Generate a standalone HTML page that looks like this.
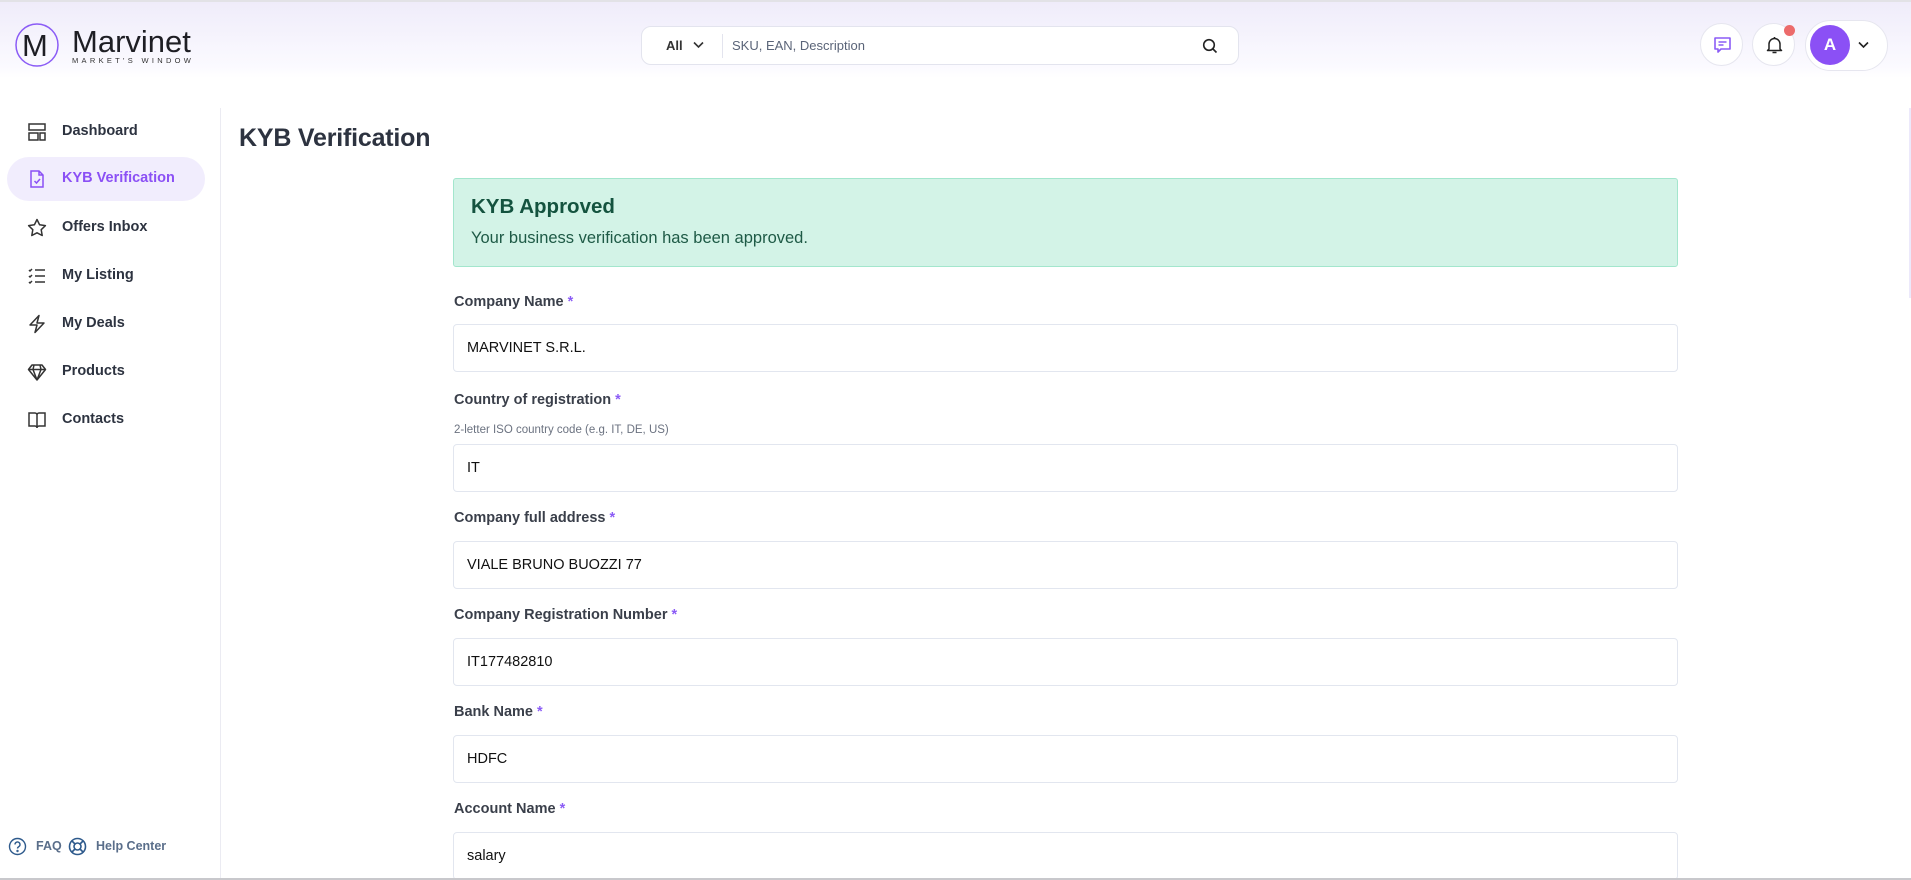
<!DOCTYPE html>
<html><head><meta charset="utf-8"><style>
*{box-sizing:border-box;margin:0;padding:0}
body{width:1911px;height:880px;overflow:hidden;background:#fff;font-family:"Liberation Sans",sans-serif;position:relative;color:#2d3340}
.abs{position:absolute}
.hdr{left:0;top:0;width:1911px;height:78px;background:linear-gradient(#efecfa,#fbfaff 85%,#fff);border-top:2px solid #e2e2e6}
.search{left:641px;top:26px;width:598px;height:39px;background:#fff;border:1px solid #e3e4ee;border-radius:10px}
.circ{width:43px;height:43px;border-radius:50%;background:#fff;border:1px solid #e6e6ef;top:23px}
.side{left:220px;top:108px;width:1px;height:772px;background:#ebebf2}
.nav{left:7px;height:44px;width:198px;border-radius:22px;font-size:14.5px;font-weight:bold;color:#2d3340}
.nav span{position:absolute;left:55px;top:13px}
.nav svg{position:absolute;left:20px;top:12px}
.lbl{left:454px;font-size:14.5px;font-weight:bold;color:#3a3f4a}
.lbl b{color:#8b5cf6}
.inp{left:453px;width:1225px;height:48px;border:1px solid #e2e6ef;border-radius:4px;font-size:14.5px;color:#111;padding:15px 0 0 13px}
</style></head><body>
<div class="abs hdr"></div>
<svg class="abs" style="left:14px;top:22px" width="46" height="46" viewBox="0 0 46 46"><circle cx="23" cy="23" r="21" fill="none" stroke="#8b5cf6" stroke-width="1.5"/></svg>
<div class="abs" style="left:22px;top:28px;font-size:31px;color:#1e1e24">M</div>
<div class="abs" style="left:72px;top:24px;font-size:31px;color:#1e1e24">Marvinet</div>
<div class="abs" style="left:72px;top:56px;font-size:7.5px;letter-spacing:3.3px;color:#333">MARKET'S WINDOW</div>
<div class="abs search">
<span class="abs" style="left:24px;top:11px;font-size:13px;font-weight:bold;color:#333">All</span>
<svg class="abs" style="left:51px;top:14px" width="11" height="8" viewBox="0 0 11 8"><path d="M1 1.5l4.5 4.5 4.5-4.5" fill="none" stroke="#333" stroke-width="1.6"/></svg>
<div class="abs" style="left:80px;top:7px;width:1px;height:24px;background:#e3e4ee"></div>
<span class="abs" style="left:90px;top:11px;font-size:13px;color:#5a6478">SKU, EAN, Description</span>
<svg class="abs" style="left:560px;top:11px" width="16" height="16" viewBox="0 0 16 16"><circle cx="7" cy="7" r="5.3" fill="none" stroke="#222" stroke-width="1.6"/><path d="M11 11l3.5 3.5" stroke="#222" stroke-width="1.6"/></svg>
</div>
<div class="abs circ" style="left:1700px"><svg class="abs" style="left:12px;top:12px" width="19" height="19" viewBox="0 0 19 19"><path d="M2 2h15v11H8l-3 3v-3H2z" fill="none" stroke="#8b5cf6" stroke-width="1.6" stroke-linejoin="round"/><path d="M5.5 6h8M5.5 9h5" stroke="#8b5cf6" stroke-width="1.6"/></svg></div>
<div class="abs circ" style="left:1752px"><svg class="abs" style="left:12px;top:11px" width="19" height="20" viewBox="0 0 19 20"><path d="M4 14V9a5.5 5.5 0 0111 0v5l1.5 1.5h-14z" fill="none" stroke="#222" stroke-width="1.5" stroke-linejoin="round"/><path d="M7.5 17.5h4M9.5 2v1.5" stroke="#222" stroke-width="1.5"/></svg></div>
<div class="abs" style="left:1784px;top:25px;width:11px;height:11px;border-radius:50%;background:#ec6b6b"></div>
<div class="abs" style="left:1805px;top:20px;width:83px;height:51px;border-radius:26px;background:#fff;border:1px solid #e6e6ef"></div>
<div class="abs" style="left:1810px;top:25px;width:40px;height:40px;border-radius:50%;background:#8b50f5;color:#fff;font-weight:bold;font-size:17px;text-align:center;line-height:40px">A</div>
<svg class="abs" style="left:1858px;top:41px" width="11" height="8" viewBox="0 0 11 8"><path d="M1 1.5l4.5 4.5 4.5-4.5" fill="none" stroke="#222" stroke-width="1.6"/></svg>

<div class="abs side"></div>
<div class="abs nav" style="top:110px"><svg width="20" height="20" viewBox="0 0 20 20" fill="none" stroke="#333" stroke-width="1.5"><rect x="2" y="2" width="16" height="6"/><rect x="2" y="11" width="9" height="7"/><rect x="13" y="11" width="5" height="7"/></svg><span>Dashboard</span></div>
<div class="abs nav" style="top:157px;background:#f1edfd;color:#8b50f5"><svg width="20" height="20" viewBox="0 0 20 20" fill="none" stroke="#8b50f5" stroke-width="1.5"><path d="M4 2h8l4 4v12H4z M12 2v4h4"/><path d="M7.5 12l2 2 3.5-4"/></svg><span style="color:#8b50f5">KYB Verification</span></div>
<div class="abs nav" style="top:206px"><svg width="20" height="20" viewBox="0 0 20 20" fill="none" stroke="#333" stroke-width="1.5" stroke-linejoin="round"><path d="M10 1.5l2.6 5.3 5.8.8-4.2 4.1 1 5.8L10 14.8l-5.2 2.7 1-5.8L1.6 7.6l5.8-.8z"/></svg><span>Offers Inbox</span></div>
<div class="abs nav" style="top:254px"><svg width="20" height="20" viewBox="0 0 20 20" fill="none" stroke="#333" stroke-width="1.5"><path d="M8 4h10M8 10h10M8 16h10M2 4l1 1 2-2M2 10l1 1 2-2M2 16l1 1 2-2"/></svg><span>My Listing</span></div>
<div class="abs nav" style="top:302px"><svg width="20" height="20" viewBox="0 0 20 20" fill="none" stroke="#333" stroke-width="1.5" stroke-linejoin="round"><path d="M12 1.5L3 11h7l-2 7.5 9-9.5h-7z"/></svg><span>My Deals</span></div>
<div class="abs nav" style="top:350px"><svg width="20" height="20" viewBox="0 0 20 20" fill="none" stroke="#333" stroke-width="1.5" stroke-linejoin="round"><path d="M5 3h10l3.5 4.5L10 18 1.5 7.5zM1.5 7.5h17M7 3l-1 4.5L10 18l4-10.5L13 3"/></svg><span>Products</span></div>
<div class="abs nav" style="top:398px"><svg width="20" height="20" viewBox="0 0 20 20" fill="none" stroke="#333" stroke-width="1.5"><path d="M2 3h6a2 2 0 012 2v13a2 2 0 00-2-2H2zM18 3h-6a2 2 0 00-2 2v13a2 2 0 012-2h6z"/></svg><span>Contacts</span></div>
<svg class="abs" style="left:8px;top:837px" width="19" height="19" viewBox="0 0 19 19" fill="none" stroke="#2e5a8c" stroke-width="1.4"><circle cx="9.5" cy="9.5" r="8"/><path d="M7 7.5a2.5 2.5 0 114 2c-1 .6-1.5 1-1.5 2"/><circle cx="9.5" cy="14" r=".5"/></svg>
<div class="abs" style="left:36px;top:839px;font-size:12.5px;font-weight:bold;color:#5a6e8a">FAQ</div>
<svg class="abs" style="left:68px;top:837px" width="19" height="19" viewBox="0 0 19 19" fill="none" stroke="#2e5a8c" stroke-width="1.6"><circle cx="9.5" cy="9.5" r="8"/><circle cx="9.5" cy="9.5" r="3.5"/><path d="M4 4l3 3M15 4l-3 3M4 15l3-3M15 15l-3-3"/></svg>
<div class="abs" style="left:96px;top:839px;font-size:12.5px;font-weight:bold;color:#5a6e8a">Help Center</div>

<div class="abs" style="left:239px;top:124px;font-size:25px;font-weight:bold;color:#2d3340;letter-spacing:-.2px">KYB Verification</div>
<div class="abs" style="left:453px;top:178px;width:1225px;height:89px;background:#d3f3e7;border:1px solid #a3e6cd;border-radius:3px"></div>
<div class="abs" style="left:471px;top:195px;font-size:20.5px;font-weight:bold;color:#14533f">KYB Approved</div>
<div class="abs" style="left:471px;top:229px;font-size:16.5px;color:#1e5a46">Your business verification has been approved.</div>

<div class="abs lbl" style="top:294px">Company Name <b>*</b></div>
<div class="abs inp" style="top:324px">MARVINET S.R.L.</div>
<div class="abs lbl" style="top:392px">Country of registration <b>*</b></div>
<div class="abs" style="left:454px;top:424px;font-size:11.5px;color:#6b7280">2-letter ISO country code (e.g. IT, DE, US)</div>
<div class="abs inp" style="top:444px">IT</div>
<div class="abs lbl" style="top:510px">Company full address <b>*</b></div>
<div class="abs inp" style="top:541px">VIALE BRUNO BUOZZI 77</div>
<div class="abs lbl" style="top:607px">Company Registration Number <b>*</b></div>
<div class="abs inp" style="top:638px">IT177482810</div>
<div class="abs lbl" style="top:704px">Bank Name <b>*</b></div>
<div class="abs inp" style="top:735px">HDFC</div>
<div class="abs lbl" style="top:801px">Account Name <b>*</b></div>
<div class="abs inp" style="top:832px">salary</div>
<div class="abs" style="left:1909px;top:108px;width:2px;height:190px;background:#ece9fb"></div>
<div class="abs" style="left:0;top:878px;width:1911px;height:2px;background:#c8c8cc"></div>
</body></html>
